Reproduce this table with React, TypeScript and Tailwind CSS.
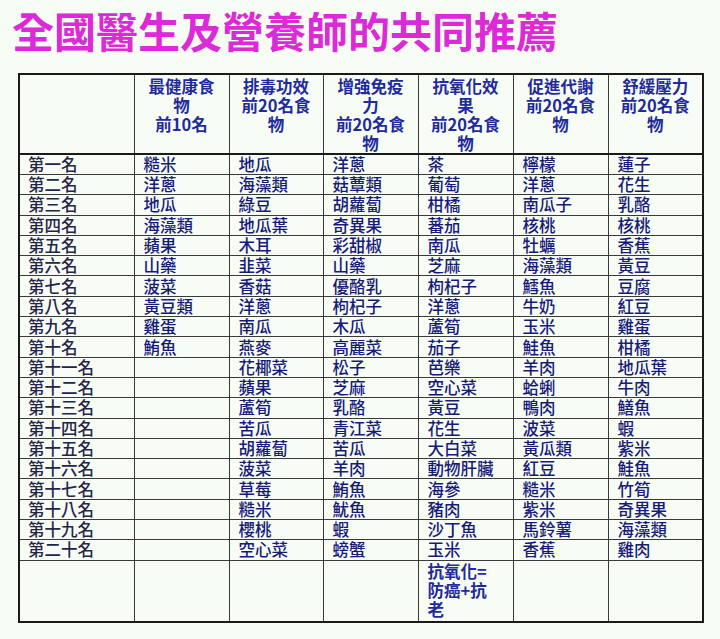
import React from "react";

const headers: string[][] = [
  ["最健康食", "物", "前10名"],
  ["排毒功效", "前20名食", "物"],
  ["增強免疫", "力", "前20名食", "物"],
  ["抗氧化效", "果", "前20名食", "物"],
  ["促進代謝", "前20名食", "物"],
  ["舒緩壓力", "前20名食", "物"],
];

const labels = [
  "第一名", "第二名", "第三名", "第四名", "第五名", "第六名", "第七名", "第八名", "第九名", "第十名",
  "第十一名", "第十二名", "第十三名", "第十四名", "第十五名", "第十六名", "第十七名", "第十八名", "第十九名", "第二十名",
];

const healthy = ["糙米", "洋蔥", "地瓜", "海藻類", "蘋果", "山藥", "菠菜", "黃豆類", "雞蛋", "鮪魚"];
const detox = ["地瓜", "海藻類", "綠豆", "地瓜葉", "木耳", "韭菜", "香菇", "洋蔥", "南瓜", "燕麥", "花椰菜", "蘋果", "蘆筍", "苦瓜", "胡蘿蔔", "菠菜", "草莓", "糙米", "櫻桃", "空心菜"];
const immune = ["洋蔥", "菇蕈類", "胡蘿蔔", "奇異果", "彩甜椒", "山藥", "優酪乳", "枸杞子", "木瓜", "高麗菜", "松子", "芝麻", "乳酪", "青江菜", "苦瓜", "羊肉", "鮪魚", "魷魚", "蝦", "螃蟹"];
const antiox = ["茶", "葡萄", "柑橘", "蕃茄", "南瓜", "芝麻", "枸杞子", "洋蔥", "蘆筍", "茄子", "芭樂", "空心菜", "黃豆", "花生", "大白菜", "動物肝臟", "海參", "豬肉", "沙丁魚", "玉米"];
const metab = ["檸檬", "洋蔥", "南瓜子", "核桃", "牡蠣", "海藻類", "鱈魚", "牛奶", "玉米", "鮭魚", "羊肉", "蛤蜊", "鴨肉", "波菜", "黃瓜類", "紅豆", "糙米", "紫米", "馬鈴薯", "香蕉"];
const stress = ["蓮子", "花生", "乳酪", "核桃", "香蕉", "黃豆", "豆腐", "紅豆", "雞蛋", "柑橘", "地瓜葉", "牛肉", "鱔魚", "蝦", "紫米", "鮭魚", "竹筍", "奇異果", "海藻類", "雞肉"];

const widths = ["w-[115px]", "w-[95px]", "w-[94px]", "w-[95px]", "w-[95px]", "w-[95px]", "w-[95px]"];

const cell = "border border-[#3a3a3a] px-[9px] p-0 align-middle whitespace-nowrap font-medium";

export default function App() {
  return (
    <div
      className="min-h-[639px] w-[720px] bg-[#f7fcf5] px-[18px]"
      style={{ fontFamily: '"Noto Sans CJK TC", "Noto Sans", sans-serif' }}
    >
      <h1 className="-ml-[6px] pt-[5px] text-[42px] font-bold leading-[50px] text-[#dc2ad8]">
        全國醫生及營養師的共同推薦
      </h1>
      <table className="mt-[18px] w-[686px] table-fixed border-collapse border-2 border-[#1a1a1a] text-[16.5px] leading-[19px]">
        <colgroup>
          {widths.map((w, i) => (
            <col key={i} className={w} />
          ))}
        </colgroup>
        <thead>
          <tr className="h-[79px]">
            <th className="border border-[#3a3a3a] border-b-2 border-b-[#1a1a1a]"></th>
            {headers.map((lines, i) => (
              <th
                key={i}
                className="border border-[#3a3a3a] border-b-2 border-b-[#1a1a1a] pt-[2px] text-center align-top font-bold text-[#1f2a9c]"
              >
                {lines.map((l, j) => (
                  <div key={j}>{l}</div>
                ))}
              </th>
            ))}
          </tr>
        </thead>
        <tbody>
          {labels.map((label, i) => (
            <tr key={i} className="h-[20.3px]">
              <td className={`${cell} pl-[8px] text-[#25254a]`}>{label}</td>
              <td className={`${cell} text-[#161a78]`}>{healthy[i] ?? ""}</td>
              <td className={`${cell} text-[#161a78]`}>{detox[i]}</td>
              <td className={`${cell} text-[#161a78]`}>{immune[i]}</td>
              <td className={`${cell} text-[#161a78]`}>{antiox[i]}</td>
              <td className={`${cell} text-[#161a78]`}>{metab[i]}</td>
              <td className={`${cell} text-[#161a78]`}>{stress[i]}</td>
            </tr>
          ))}
          <tr className="h-[62px]">
            <td className="border border-[#3a3a3a]"></td>
            <td className="border border-[#3a3a3a]"></td>
            <td className="border border-[#3a3a3a]"></td>
            <td className="border border-[#3a3a3a]"></td>
            <td className="border border-[#3a3a3a] px-[9px] pt-[1px] align-top font-bold text-[#1f2a9c]">
              <div>抗氧化=</div>
              <div>防癌+抗</div>
              <div>老</div>
            </td>
            <td className="border border-[#3a3a3a]"></td>
            <td className="border border-[#3a3a3a]"></td>
          </tr>
        </tbody>
      </table>
    </div>
  );
}
